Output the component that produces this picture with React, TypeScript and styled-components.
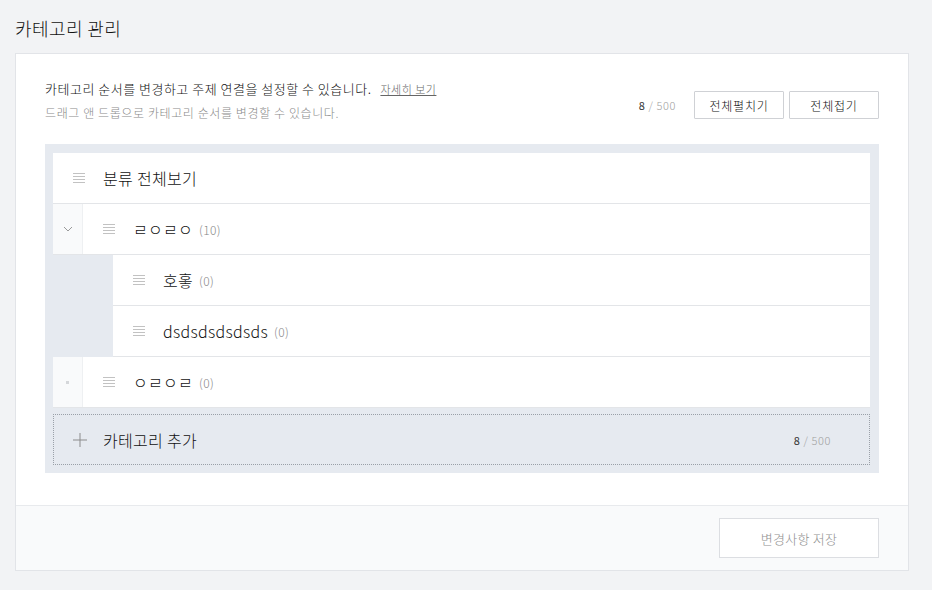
import React from "react";
import styled, { createGlobalStyle } from "styled-components";

const Global = createGlobalStyle`
  html, body { margin: 0; padding: 0; background: #f2f3f5; }
  body { font-family: "Noto Sans CJK KR", "Noto Sans", sans-serif; color: #333; font-weight: 300; }
  * { box-sizing: border-box; }
`;

const Page = styled.div`
  padding: 14px 0 0 15px;
  width: 932px;
  height: 590px;
`;

const Title = styled.h1`
  margin: 0;
  font-size: 18px;
  font-weight: 300;
  letter-spacing: 0.4px;
  line-height: 28px;
  color: #111;
  height: 39px;
`;

const Card = styled.div`
  width: 894px;
  background: #fff;
  border: 1px solid #e2e4e8;
`;

const Body = styled.div`
  padding: 26px 29px 32px 29px;
`;

const Header = styled.div`
  display: flex;
  justify-content: space-between;
  align-items: flex-end;
  height: 42px;
`;

const Desc = styled.div`
  display: flex;
  flex-direction: column;
  gap: 6px;
`;

const Line = styled.div`
  font-size: 13px;
  line-height: 18px;
  color: #111;
  font-weight: 300;
  letter-spacing: 0.5px;
  display: flex;
  align-items: baseline;
`;

const SubLine = styled.div`
  font-size: 12px;
  line-height: 18px;
  color: #8a8a8a;
  letter-spacing: 0.6px;
`;

const More = styled.a`
  margin-left: 9px;
  font-size: 11px;
  color: #666;
  font-weight: 300;
  text-decoration: underline;
  cursor: pointer;
`;

const Actions = styled.div`
  display: flex;
  align-items: center;
  padding-bottom: 3px;
`;

const Counter = styled.span<{ $mr?: number }>`
  font-size: 11px;
  color: #a0a0a0;
  letter-spacing: 0.6px;
  margin-right: ${(p) => p.$mr ?? 0}px;
  b { font-weight: 400; color: #333; }
`;

const Btn = styled.button`
  width: 90px;
  height: 28px;
  background: #fff;
  border: 1px solid #cfd1d5;
  border-radius: 1px;
  font-family: inherit;
  font-weight: 300;
  font-size: 12px;
  letter-spacing: 0.8px;
  color: #111;
  padding: 0;
  margin-left: 5px;
  cursor: pointer;
  &:first-of-type { margin-left: 0; }
`;

const Tree = styled.div`
  margin-top: 22px;
  background: #e6eaf0;
  padding: 9px 9px 8px 8px;
`;

const List = styled.div`
  display: flex;
  flex-direction: column;
`;

const Row = styled.div<{ $indent?: number }>`
  display: flex;
  align-items: stretch;
  height: 51px;
  background: #fff;
  border-bottom: 1px solid #e3e5e8;
  margin-left: ${(p) => p.$indent ?? 0}px;
`;

const Toggle = styled.div`
  width: 30px;
  flex: none;
  background: #f9fafb;
  border-right: 1px solid #eef0f2;
  display: flex;
  align-items: center;
  justify-content: center;
`;

const Dot = styled.span`
  width: 3px;
  height: 3px;
  background: #d5d7da;
`;

const RowMain = styled.div`
  display: flex;
  align-items: center;
  padding-left: 20px;
  flex: 1;
`;

const Handle = styled.span`
  display: inline-flex;
  width: 12px;
  margin-right: 18px;
`;

const Name = styled.span`
  font-size: 16px;
  color: #111;
  font-weight: 300;
  letter-spacing: 0.3px;
`;

const Count = styled.span`
  font-size: 12px;
  color: #888;
  margin-left: 6px;
  letter-spacing: 0.3px;
`;

const AddRow = styled.div`
  margin-top: 6px;
  height: 51px;
  border: 1px dotted #9aa0a8;
  background: #e6eaf0;
  display: flex;
  align-items: center;
  padding-left: 19px;
  justify-content: space-between;
`;

const AddLabel = styled.div`
  display: flex;
  align-items: center;
  gap: 16px;
`;

const Footer = styled.div`
  border-top: 1px solid #e8eaed;
  background: #f9fafb;
  height: 65px;
  display: flex;
  align-items: center;
  justify-content: flex-end;
  padding-right: 29px;
`;

const SaveBtn = styled.button`
  width: 160px;
  height: 40px;
  background: #fff;
  border: 1px solid #dcdee2;
  font-family: inherit;
  font-weight: 300;
  font-size: 13px;
  letter-spacing: 0.3px;
  color: #8f8f8f;
  cursor: pointer;
`;

const HandleIcon = () => (
  <svg width="12" height="11" viewBox="0 0 12 11">
    {[0.5, 3.5, 6.5, 9.5].map((y) => (
      <line key={y} x1="0" x2="12" y1={y} y2={y} stroke="#c2c2c2" strokeWidth="1" />
    ))}
  </svg>
);

const Chevron = () => (
  <svg width="10" height="6" viewBox="0 0 10 6">
    <polyline points="1,1 5,5 9,1" fill="none" stroke="#9a9a9a" strokeWidth="1" />
  </svg>
);

const Plus = () => (
  <svg width="14" height="14" viewBox="0 0 14 14">
    <line x1="7" y1="0" x2="7" y2="14" stroke="#8c8c8c" strokeWidth="1" />
    <line x1="0" y1="7" x2="14" y2="7" stroke="#8c8c8c" strokeWidth="1" />
  </svg>
);

type Item = {
  name: string;
  count?: number;
  toggle?: "open" | "dot";
  indent?: number;
};

const items: Item[] = [
  { name: "분류 전체보기" },
  { name: "ㄹㅇㄹㅇ", count: 10, toggle: "open" },
  { name: "호홓", count: 0, indent: 60 },
  { name: "dsdsdsdsdsds", count: 0, indent: 60 },
  { name: "ㅇㄹㅇㄹ", count: 0, toggle: "dot" },
];

export default function App() {
  return (
    <>
      <Global />
      <Page>
        <Title>카테고리 관리</Title>
        <Card>
          <Body>
            <Header>
              <Desc>
                <Line>
                  카테고리 순서를 변경하고 주제 연결을 설정할 수 있습니다.
                  <More>자세히 보기</More>
                </Line>
                <SubLine>드래그 앤 드롭으로 카테고리 순서를 변경할 수 있습니다.</SubLine>
              </Desc>
              <Actions>
                <Counter $mr={18}>
                  <b>8</b> / 500
                </Counter>
                <Btn>전체펼치기</Btn>
                <Btn>전체접기</Btn>
              </Actions>
            </Header>
            <Tree>
              <List>
                {items.map((it) => (
                  <Row key={it.name} $indent={it.indent}>
                    {it.toggle && (
                      <Toggle>{it.toggle === "open" ? <Chevron /> : <Dot />}</Toggle>
                    )}
                    <RowMain>
                      <Handle>
                        <HandleIcon />
                      </Handle>
                      <Name>{it.name}</Name>
                      {it.count !== undefined && <Count>({it.count})</Count>}
                    </RowMain>
                  </Row>
                ))}
              </List>
              <AddRow>
                <AddLabel>
                  <Plus />
                  <Name>카테고리 추가</Name>
                </AddLabel>
                <Counter $mr={38}>
                  <b>8</b> / 500
                </Counter>
              </AddRow>
            </Tree>
          </Body>
          <Footer>
            <SaveBtn>변경사항 저장</SaveBtn>
          </Footer>
        </Card>
      </Page>
    </>
  );
}
